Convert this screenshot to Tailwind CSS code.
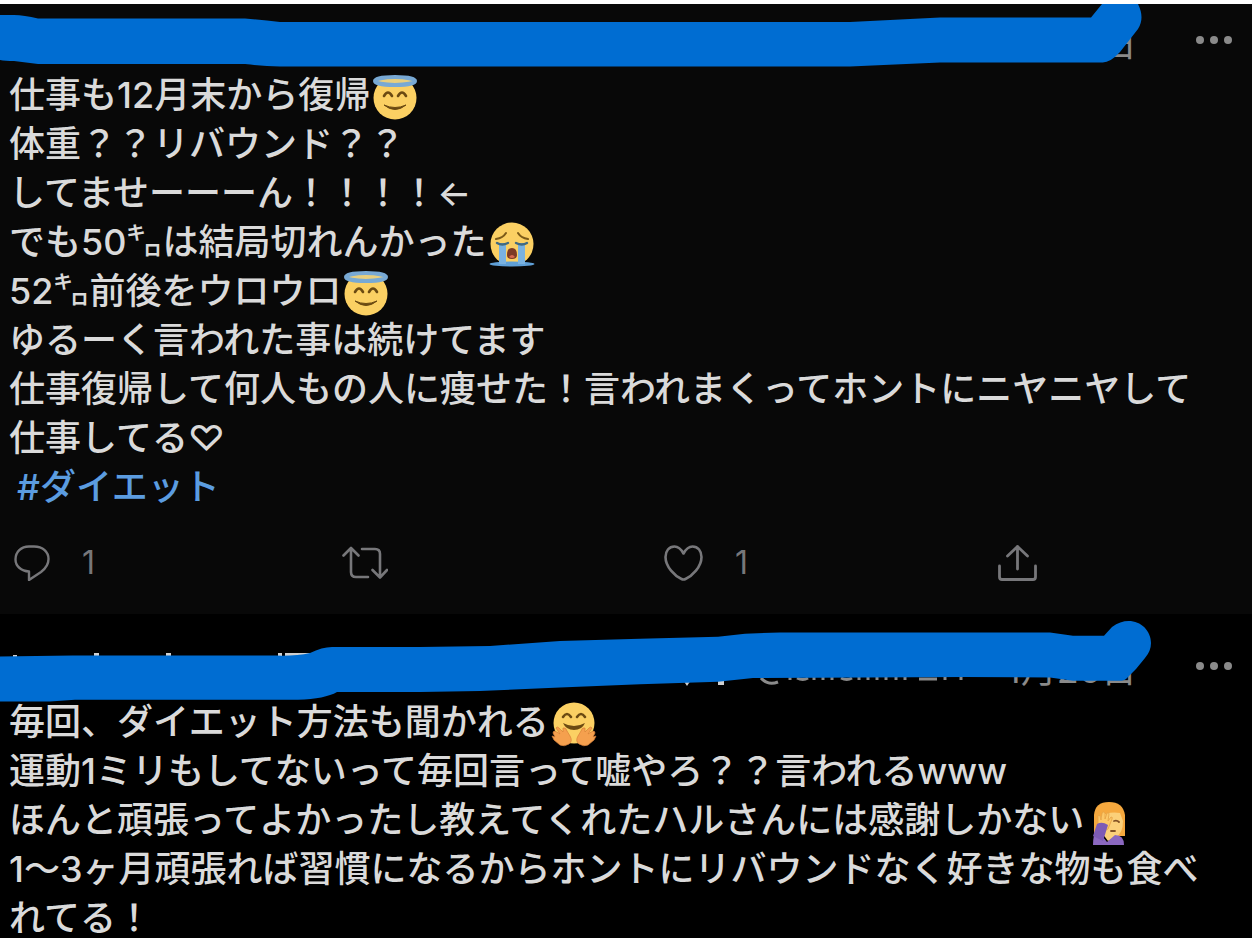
<!DOCTYPE html>
<html lang="ja">
<head>
    <meta charset="UTF-8">
    <meta name="viewport" content="width=device-width, initial-scale=1.0">
    <script src="https://cdn.jsdelivr.net/npm/@tailwindcss/browser@4"></script>
    <title>#ダイエット</title>
</head>
<body class="bg-black font-['Inter','Noto_Sans_CJK_JP',sans-serif] text-[#dadada] overflow-x-hidden">
    <!-- emoji -->
    <svg class="hidden">
        <symbol id="halo" viewBox="0 0 46 46">
            <circle cx="23" cy="23" r="21.5" fill="#fbd063"/>
            <ellipse cx="23" cy="6" rx="20" ry="4" fill="#e9cf7c" stroke="#78a9d4" stroke-width="4"/>
            <path d="M12 21q4-7 8 0M26 21q4-7 8 0" fill="none" stroke="#6b4a12" stroke-width="2.6" stroke-linecap="round"/>
            <path d="M12 30q11 9 22 0q-11 5-22 0z" fill="#6b4a12" stroke="#6b4a12" stroke-linejoin="round"/>
        </symbol>
        <symbol id="cry" viewBox="0 0 46 46">
            <circle cx="23" cy="22" r="21.5" fill="#fbd063"/>
            <ellipse cx="23" cy="42" rx="22.5" ry="2.6" fill="#5f9fd6"/>
            <path d="M10 21h7v21h-7zM29 21h7v21h-7z" fill="#7ab2e0"/>
            <path d="M7 17q7-1 10-6M39 17q-7-1-10-6" fill="none" stroke="#7b5a18" stroke-width="2" stroke-linecap="round"/>
            <path d="M8 21q5 3 11 0M27 21q6 3 11 0" fill="none" stroke="#426a80" stroke-width="2.4" stroke-linecap="round"/>
            <path d="M18 33q0-7 5-7t5 7q0 4-5 4t-5-4z" fill="#7d3a24"/>
            <path d="M20 35q3-4 6 0q-3 2-6 0z" fill="#d8694f"/>
        </symbol>
        <symbol id="hug" viewBox="0 0 46 46">
            <circle cx="23" cy="21" r="20.5" fill="#fbd063"/>
            <path d="M12 15q4-6 8 0M26 15q4-6 8 0" fill="none" stroke="#6b4a12" stroke-width="2.6" stroke-linecap="round"/>
            <path d="M12 21q11 6 22 0q-3 7-11 7t-11-7z" fill="#6b4a12"/>
            <path id="hand" d="M4 29l5 3-4-6q1-2 3 0l4 4 0-4q3-1 4 3l3 5q3 5-1 8-5 3-9 1l-6-5-2-4 3 1-2-4q0-2 2-2z" fill="#f5a04e" stroke="#d97f38" stroke-width=".7"/>
            <use href="#hand" transform="translate(46) scale(-1 1)"/>
        </symbol>
        <symbol id="facepalm" viewBox="0 0 46 46">
            <path d="M8 36V15Q9 2 23 2t16 13v21z" fill="#f5a83e"/>
            <path d="M14 17q8-6 20-4l3 8q0 12-7 16l-8 4-6-8z" fill="#fbd07a"/>
            <path d="M7 45q0-11 4-15l6 7 4 5 8-7q9 0 9 10z" fill="#8b68c0"/>
            <path d="M12 24l0-8q1-2 2 0l1 4 1-7q2-2 3 0l0 6 2-6q2-1 2 1l-1 7 3-4q2 0 1 2l-4 10-6 3z" fill="#fdc868" stroke="#e4a144" stroke-width=".8"/>
            <path d="M7 36l4-12q5-3 11 1l-5 16z" fill="#7d5bb5"/>
            <path d="M28 21q3-1 5 1M25 31h4" fill="none" stroke="#805024" stroke-width="1.8" stroke-linecap="round"/>
        </symbol>
    </svg>

    <article class="bg-[#080808] border-t-4 border-white">
        <header class="relative flex items-center justify-end h-[67px] pt-1 pr-5 text-[#8a8a8a]">
            <time class="mt-2 mr-[59px] text-[36px] leading-[48px]">日</time>
            <button type="button" aria-label="その他">
                <svg class="w-9 h-2" viewBox="0 0 36 8" fill="currentColor"><circle cx="4" cy="4" r="4"/><circle cx="18" cy="4" r="4"/><circle cx="32" cy="4" r="4"/></svg>
            </button>
            <!-- marker stroke over the name -->
            <svg class="absolute inset-x-0 top-0 w-full h-[67px] pointer-events-none" viewBox="0 4 1252 67" preserveAspectRatio="none">
                <path fill="#006dd2" d="M0 15H14Q24 15 38 18.5H245Q262 20 280 22H850L890 20L940 17.5H1091L1102 4H1138Q1145 18 1138 29L1120 52Q1110 63 1102 62.5H940L850 66.5H280Q262 66 245 64H38L14 61Q5 61 0 60z"/>
            </svg>
        </header>
        <p class="pl-[9px] text-[36px] leading-[49px] font-medium whitespace-nowrap">
            仕事も12月末から復帰<svg class="inline-block w-[46px] h-[46px] ml-0.5 -my-2 align-middle"><use href="#halo"/></svg><br>
            体重？？リバウンド？？<br>
            してませーーーん！！！！←<br>
            でも50㌔は結局切れんかった<svg class="inline-block w-[46px] h-[46px] ml-0.5 -my-2 align-middle"><use href="#cry"/></svg><br>
            52㌔前後をウロウロ<svg class="inline-block w-[46px] h-[46px] ml-0.5 -my-2 align-middle"><use href="#halo"/></svg><br>
            ゆるーく言われた事は続けてます<br>
            仕事復帰して何人もの人に痩せた！言われまくってホントにニヤニヤして<br>
            仕事してる♡<br>
            <a href="#" class="ml-2 text-[#5b9ce0]">#ダイエット</a>
        </p>
        <footer class="grid grid-cols-[328fr_322fr_334fr_254fr] items-center pl-[14px] pt-[30px] pb-[30px] text-[32px] leading-[42px] text-[#77777a]">
            <button type="button" aria-label="返信" class="flex items-center gap-8">
                <svg class="w-9 h-9" viewBox="0 0 36 36" fill="none" stroke="currentColor" stroke-width="2.4" stroke-linejoin="round"><path d="M15 26.5C7 26 1.5 21 1.5 14.5C1.5 7 7 1.5 15 1.5H20C29 1.5 34.5 7 34.5 14C34.5 20 31 24 27 27L15 35z"/></svg>
                <span>1</span>
            </button>
            <button type="button" aria-label="リツイート" class="flex items-center">
                <svg class="w-[46px] h-9" viewBox="0 0 46 36" fill="none" stroke="currentColor" stroke-width="2.6" stroke-linecap="round" stroke-linejoin="round"><path d="M1.5 10.5L9 3L16.5 10.5M9 3V27Q9 32 14 32H26M20 4H33Q38 4 38 9V32M30.5 25L38 32.5L45 25"/></svg>
            </button>
            <button type="button" aria-label="いいね" class="flex items-center gap-8">
                <svg class="w-[39px] h-9" viewBox="0 0 39 36" fill="none" stroke="currentColor" stroke-width="2.6" stroke-linejoin="round"><path d="M19.5 8.5C17 4 14 1.5 10.5 1.5C5 1.5 1.5 6 1.5 12C1.5 22 11 31 17.5 34Q19.5 35 21.5 34C28 31 37.5 22 37.5 12C37.5 6 34 1.5 28.5 1.5C25 1.5 22 4 19.5 8.5z"/></svg>
                <span>1</span>
            </button>
            <button type="button" aria-label="共有" class="flex items-center">
                <svg class="w-[39px] h-9" viewBox="0 0 39 36" fill="none" stroke="currentColor" stroke-width="2.8" stroke-linecap="round" stroke-linejoin="round"><path d="M19.5 24V1.5M9.5 11L19.5 1.5L29.5 11M1.5 21V32Q1.5 34.5 4 34.5H35Q37.5 34.5 37.5 32V21"/></svg>
            </button>
        </footer>
    </article>

    <article class="bg-black">
        <header class="relative flex items-center justify-end h-[84px] pt-5 pr-5 text-[#8a8a8a]">
            <time class="mt-2 mr-[59px] text-[36px] leading-[48px]">1月26日</time>
            <button type="button" aria-label="その他">
                <svg class="w-9 h-2" viewBox="0 0 36 8" fill="currentColor"><circle cx="4" cy="4" r="4"/><circle cx="18" cy="4" r="4"/><circle cx="32" cy="4" r="4"/></svg>
            </button>
            <svg class="absolute inset-x-0 top-0 w-full h-[88px] pointer-events-none" viewBox="0 614 1252 88" preserveAspectRatio="none">
                <!-- bits of the covered name -->
                <path fill="#d0d0d0" d="M13 655h4v3h-4zM94 653h5v5h-5zM166 653h5v5h-5zM278 653h4v4h-4zM285 653h26v3h-26zM683 680h8l-4 6zM718 680h6v5h-6z"/>
                <path fill="none" stroke="#8a8a8a" stroke-width="3" d="M761 678q7 8 17 4M790 676v4M797 678q6 3 11 0M814 676v4M823 676v4M832 676v4M841 678q6 3 11 0M859 676v4M868 676v4M877 676v4M886 676v4M896 676v4M905 676v4M919 679h18M945 676v4M961 676v4"/>
                <path fill="#006dd2" d="M0 656.5L73 655.6H277Q297 656 310 653Q322 647 332 647H420L490 646L560 641L640 638.7L718 636.7L745 633.7L780 632.5H1050L1073 635.7H1104L1112 627C1130 613 1151 625 1151 643Q1151 651 1145 658L1136 669L1126 679Q1124 681 1118 680.7H1073L1050 677.5L964 677L753 678L718 681.7L640 684.3L560 687.5L480 691L420 692H337Q325 699 298 699.7H75L50 701.5H0z"/>
            </svg>
        </header>
        <p class="pl-[9px] text-[36px] leading-[49px] font-medium whitespace-nowrap">
            毎回、ダイエット方法も聞かれる<svg class="inline-block w-[46px] h-[46px] ml-0.5 -my-2 align-middle"><use href="#hug"/></svg><br>
            運動1ミリもしてないって毎回言って嘘やろ？？言われるwww<br>
            ほんと頑張ってよかったし教えてくれたハルさんには感謝しかない<svg class="inline-block w-[46px] h-[46px] ml-0.5 -my-2 align-middle"><use href="#facepalm"/></svg><br>
            1〜3ヶ月頑張れば習慣になるからホントにリバウンドなく好きな物も食べ<br>
            れてる！
        </p>
    </article>
</body>
</html>
